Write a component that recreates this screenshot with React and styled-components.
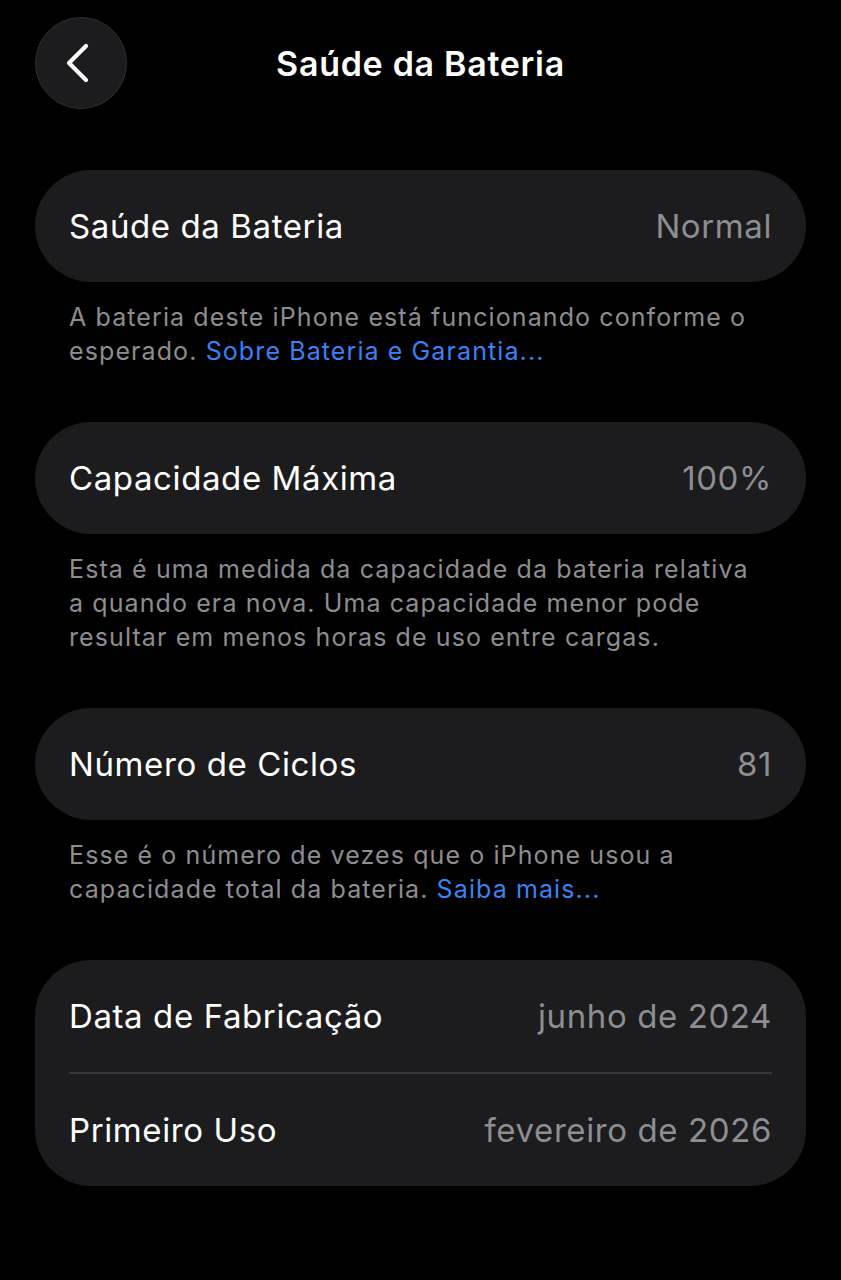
import styled, { createGlobalStyle } from "styled-components";

const Global = createGlobalStyle`
    html, body {
        margin: 0;
        background: #000000;
    }
    body {
        font-family: Inter, "Noto Sans", "Liberation Sans", sans-serif;
        color: #ffffff;
        -webkit-font-smoothing: antialiased;
    }
`;

export default function App() {
    return (
        <Page>
            <Global />
            <Header>
                <BackButton aria-label="Voltar">
                    <svg width="30" height="42" viewBox="0 0 30 42" fill="none">
                        <polyline points="22,4 5,21 22,38" stroke="#ffffff" strokeWidth="4.2" strokeLinecap="round" strokeLinejoin="round" />
                    </svg>
                </BackButton>
                <Title>Saúde da Bateria</Title>
                <span />
            </Header>

            <Section>
                <Card>
                    <Row>
                        <Label>Saúde da Bateria</Label>
                        <Value>Normal</Value>
                    </Row>
                </Card>
                <Footer>
                    A bateria deste iPhone está funcionando conforme o esperado. <Link>Sobre Bateria e Garantia...</Link>
                </Footer>
            </Section>

            <Section>
                <Card>
                    <Row>
                        <Label>Capacidade Máxima</Label>
                        <Value>100%</Value>
                    </Row>
                </Card>
                <Footer>
                    Esta é uma medida da capacidade da bateria relativa a quando era nova. Uma capacidade menor pode resultar em menos horas de uso entre cargas.
                </Footer>
            </Section>

            <Section>
                <Card>
                    <Row>
                        <Label>Número de Ciclos</Label>
                        <Value>81</Value>
                    </Row>
                </Card>
                <Footer>
                    Esse é o número de vezes que o iPhone usou a capacidade total da bateria. <Link>Saiba mais...</Link>
                </Footer>
            </Section>

            <Section>
                <Card>
                    <Row>
                        <Label>Data de Fabricação</Label>
                        <Value>junho de 2024</Value>
                    </Row>
                    <Divider />
                    <Row>
                        <Label>Primeiro Uso</Label>
                        <Value>fevereiro de 2026</Value>
                    </Row>
                </Card>
            </Section>
        </Page>
    )
}

const Page = styled.div`
    width: 841px;
    min-height: 1280px;
    box-sizing: border-box;
    padding: 17px 35px 40px;
    background: #000000;
    display: flex;
    flex-direction: column;
    gap: 54px;
`;

const Header = styled.div`
    display: grid;
    grid-template-columns: 92px 1fr 92px;
    align-items: center;
    height: 92px;
    margin-bottom: 7px;
`;

const BackButton = styled.button`
    width: 92px;
    height: 92px;
    border-radius: 50%;
    background: #1c1c1e;
    border: 1.5px solid #2e2e30;
    display: flex;
    align-items: center;
    justify-content: center;
    padding: 0 4px 0 0;
    box-sizing: border-box;
`;

const Title = styled.h1`
    margin: 0;
    text-align: center;
    font-size: 34px;
    font-weight: 600;
    letter-spacing: 0.7px;
`;

const Section = styled.div`
    display: flex;
    flex-direction: column;
`;

const Card = styled.div`
    background: #1c1c1e;
    border-radius: 56px;
    padding: 0 34px;
    display: flex;
    flex-direction: column;
`;

const Row = styled.div`
    height: 112px;
    display: flex;
    align-items: center;
    justify-content: space-between;
`;

const Label = styled.span`
    font-size: 33px;
    font-weight: 400;
    letter-spacing: 0.6px;
    color: #ffffff;
`;

const Value = styled.span`
    font-size: 33px;
    letter-spacing: 0.6px;
    color: #8d8d92;
`;

const Divider = styled.div`
    height: 1.5px;
    background: #38383a;
`;

const Footer = styled.p`
    margin: 18px 0 0;
    padding: 0 50px 0 34px;
    font-size: 25px;
    line-height: 34px;
    letter-spacing: 1.1px;
    color: #8d8d92;
`;

const Link = styled.span`
    color: #3b82f6;
`;
